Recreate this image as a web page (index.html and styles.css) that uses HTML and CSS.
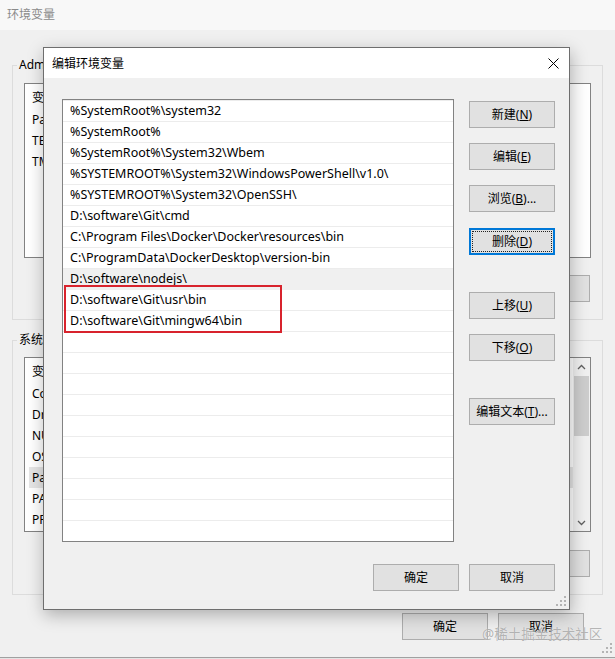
FILE: index.html
```html
<!DOCTYPE html>
<html lang="zh-CN">
<head>
<meta charset="utf-8">
<title>编辑环境变量</title>
<link rel="stylesheet" href="styles.css">
</head>
<body>
<div class="bgwin">
  <div class="bg-title">环境变量</div>
  <div class="bg-body">
    <fieldset class="group group-user">
      <legend>Administrator 的用户变量(U)</legend>
      <div class="lv">
        <div class="lv-main">
          <div class="lv-head"><span class="c1">变量</span><span>值</span></div>
          <div class="lv-row"><span class="c1">Path</span><span>C:\Users\Administrator\AppData\Local\Microsoft\WindowsApps;</span></div>
          <div class="lv-row"><span class="c1">TEMP</span><span>%USERPROFILE%\AppData\Local\Temp</span></div>
          <div class="lv-row"><span class="c1">TMP</span><span>%USERPROFILE%\AppData\Local\Temp</span></div>
        </div>
      </div>
      <div class="btnrow">
        <button class="btn">新建(<u>N</u>)...</button>
        <button class="btn">编辑(<u>E</u>)...</button>
        <button class="btn">删除(<u>D</u>)</button>
      </div>
    </fieldset>
    <fieldset class="group group-sys">
      <legend>系统变量(S)</legend>
      <div class="lv">
        <div class="lv-main">
          <div class="lv-head"><span class="c1">变量</span><span>值</span></div>
          <div class="lv-row"><span class="c1">ComSpec</span><span>C:\Windows\system32\cmd.exe</span></div>
          <div class="lv-row"><span class="c1">DriverData</span><span>C:\Windows\System32\Drivers\DriverData</span></div>
          <div class="lv-row"><span class="c1">NUMBER_OF_PROCESSORS</span><span>8</span></div>
          <div class="lv-row"><span class="c1">OS</span><span>Windows_NT</span></div>
          <div class="lv-row lv-sel"><span class="c1">Path</span><span>C:\Windows\system32;C:\Windows;</span></div>
          <div class="lv-row"><span class="c1">PATHEXT</span><span>.COM;.EXE;.BAT;.CMD;.VBS;.VBE;.JS</span></div>
          <div class="lv-row"><span class="c1">PROCESSOR_ARCHITECTURE</span><span>AMD64</span></div>
        </div>
        <div class="sbar">
          <div class="sbar-arrow"><svg width="9" height="6" viewBox="0 0 9 6"><path d="M1 5 L4.5 1.5 L8 5" fill="none" stroke="#606060" stroke-width="1.3"/></svg></div>
          <div class="sbar-track"><div class="sbar-thumb"></div></div>
          <div class="sbar-arrow"><svg width="9" height="6" viewBox="0 0 9 6"><path d="M1 1 L4.5 4.5 L8 1" fill="none" stroke="#606060" stroke-width="1.3"/></svg></div>
        </div>
      </div>
      <div class="btnrow btnrow-sys">
        <button class="btn">新建(<u>W</u>)...</button>
        <button class="btn">编辑(<u>I</u>)...</button>
        <button class="btn">删除(<u>L</u>)</button>
      </div>
    </fieldset>
    <div class="bg-foot">
      <button class="btn">确定</button>
      <button class="btn">取消</button>
    </div>
  </div>
  <div class="taskstrip"></div>
  <svg class="grip grip-bg" width="10" height="10" viewBox="0 0 10 10"><g fill="#b4b4b4"><rect x="8" y="0" width="2" height="2"/><rect x="4" y="4" width="2" height="2"/><rect x="8" y="4" width="2" height="2"/><rect x="0" y="8" width="2" height="2"/><rect x="4" y="8" width="2" height="2"/><rect x="8" y="8" width="2" height="2"/></g></svg>
  <div class="watermark">@稀土掘金技术社区</div>
</div>

<div class="dialog">
  <div class="dlg-title">
    <span>编辑环境变量</span>
    <svg class="dlg-close" width="11" height="11" viewBox="0 0 11 11"><path d="M0.5 0.5 L10.5 10.5 M10.5 0.5 L0.5 10.5" stroke="#000" stroke-width="1"/></svg>
  </div>
  <div class="dlg-body">
    <div class="dlg-main">
      <div class="plist">
        <div class="prow">%SystemRoot%\system32</div>
        <div class="prow">%SystemRoot%</div>
        <div class="prow">%SystemRoot%\System32\Wbem</div>
        <div class="prow">%SYSTEMROOT%\System32\WindowsPowerShell\v1.0\</div>
        <div class="prow">%SYSTEMROOT%\System32\OpenSSH\</div>
        <div class="prow">D:\software\Git\cmd</div>
        <div class="prow">C:\Program Files\Docker\Docker\resources\bin</div>
        <div class="prow">C:\ProgramData\DockerDesktop\version-bin</div>
        <div class="prow prow-hover">D:\software\nodejs\</div>
        <div class="prow">D:\software\Git\usr\bin</div>
        <div class="prow">D:\software\Git\mingw64\bin</div>
        <div class="redmark"></div>
      </div>
      <div class="btncol">
        <button class="btn">新建(<u>N</u>)</button>
        <button class="btn">编辑(<u>E</u>)</button>
        <button class="btn">浏览(<u>B</u>)...</button>
        <button class="btn btn-focus">删除(<u>D</u>)</button>
        <button class="btn btn-sep">上移(<u>U</u>)</button>
        <button class="btn">下移(<u>O</u>)</button>
        <button class="btn btn-sep">编辑文本(<u>T</u>)...</button>
      </div>
    </div>
    <div class="dlg-foot">
      <button class="btn">确定</button>
      <button class="btn">取消</button>
    </div>
  </div>
  <svg class="grip grip-dlg" width="10" height="10" viewBox="0 0 10 10"><g fill="#b4b4b4"><rect x="8" y="0" width="2" height="2"/><rect x="4" y="4" width="2" height="2"/><rect x="8" y="4" width="2" height="2"/><rect x="0" y="8" width="2" height="2"/><rect x="4" y="8" width="2" height="2"/><rect x="8" y="8" width="2" height="2"/></g></svg>
</div>
</body>
</html>
```

FILE: styles.css
```css
* { box-sizing: border-box; }
html, body { margin: 0; padding: 0; }
body {
  width: 615px;
  height: 659px;
  overflow: hidden;
  position: relative;
  background: #f0f0f0;
  font-family: "Noto Sans", "Noto Sans CJK SC", sans-serif;
  font-size: 12px;
  color: #000;
}
u { text-decoration: underline; text-underline-offset: 1px; }

.btn {
  width: 86px;
  height: 27px;
  flex: none;
  background: #e1e1e1;
  border: 1px solid #adadad;
  padding: 0;
  margin: 0;
  font: inherit;
  color: #000;
  line-height: 1;
  display: flex;
  align-items: center;
  justify-content: center;
  position: relative;
}

/* background window */
.bgwin {
  width: 615px;
  height: 659px;
  display: flex;
  flex-direction: column;
  position: relative;
}
.bg-title {
  height: 30px;
  line-height: 30px;
  padding-left: 7px;
  color: #8a8a8a;
  background: #f8f8f8;
  flex: none;
}
.bg-body {
  padding: 27px 12px 0 12px;
}
.group {
  margin: 0;
  border: 1px solid #dcdcdc;
  padding: 10px 11px 17px 11px;
  min-width: 0;
}
.group legend {
  padding: 0 2px;
  margin-left: -7px;
  line-height: 16px;
  height: 16px;
}
.group-sys {
  margin-top: 12px;
  padding-top: 9px;
}
.lv {
  height: 175px;
  border: 1px solid #828282;
  background: #fff;
  display: flex;
  overflow: hidden;
}
.lv-main { flex: 1; min-width: 0; }
.lv-head, .lv-row {
  display: flex;
  align-items: center;
  padding-left: 7px;
  white-space: nowrap;
}
.lv-head { height: 25px; }
.lv-row { height: 21px; }
.lv-sel {
  background: #e5e5e5;
  margin-left: 4px;
  padding-left: 3px;
}
.c1 { width: 150px; flex: none; }
.sbar {
  width: 17px;
  flex: none;
  background: #f0f0f0;
  display: flex;
  flex-direction: column;
}
.sbar-arrow {
  height: 17px;
  display: flex;
  align-items: center;
  justify-content: center;
}
.sbar-track {
  flex: 1;
  padding: 1px 1px 0 1px;
}
.sbar-thumb {
  height: 60px;
  background: #cdcdcd;
}
.btnrow {
  margin-top: 17px;
  display: flex;
  justify-content: flex-end;
  gap: 10px;
  padding-right: 1px;
}
.btnrow-sys { margin-top: 18px; }
.bg-foot {
  margin-top: 18px;
  margin-right: 19px;
  display: flex;
  justify-content: flex-end;
  gap: 10px;
}
.taskstrip {
  margin-top: auto;
  height: 2px;
  border-top: 1px solid #a0a0a0;
  background: #e4e4e4;
  flex: none;
}
.grip { position: absolute; }
.grip-bg { right: 3px; bottom: 6px; }
.watermark {
  position: absolute;
  left: 482px;
  top: 624px;
  font-size: 13.5px;
  line-height: 20px;
  color: rgba(150, 150, 150, 0.7);
  text-shadow: 0 0 1px rgba(255,255,255,0.8);
  letter-spacing: 0;
}

/* dialog */
.dialog {
  position: absolute;
  left: 43px;
  top: 47px;
  width: 527px;
  height: 563px;
  border: 1px solid #6e6e6e;
  background: #f0f0f0;
  box-shadow: 1px 5px 16px rgba(0, 0, 0, 0.28);
  display: flex;
  flex-direction: column;
}
.dlg-title {
  height: 30px;
  flex: none;
  background: #fff;
  display: flex;
  align-items: center;
  justify-content: space-between;
  padding: 0 10px 0 8px;
}
.dlg-close { display: block; }
.dlg-body {
  flex: 1;
  display: flex;
  flex-direction: column;
  padding: 21px 14px 18px 18px;
}
.dlg-main {
  display: flex;
  gap: 15px;
}
.plist {
  width: 392px;
  height: 443px;
  flex: none;
  padding-top: 1px;
  border: 1px solid #828282;
  background-color: #fff;
  background-image: repeating-linear-gradient(to bottom, transparent 0, transparent 20px, #ececec 20px, #ececec 21px);
  background-position: 0 1px;
  position: relative;
  overflow: hidden;
}
.prow {
  height: 21px;
  line-height: 20px;
  padding-left: 7px;
  font-size: 12.5px;
  white-space: nowrap;
}
.prow-hover { background: #f0f0f0; }
.redmark {
  position: absolute;
  left: 1px;
  top: 185px;
  width: 218px;
  height: 48px;
  border: 2px solid #d8232d;
}
.btncol {
  margin-top: 2px;
  display: flex;
  flex-direction: column;
  gap: 15px;
}
.btn-sep { margin-top: 22px; }
.btn-focus {
  margin-top: 1px;
  border: 1px solid #0078d7;
  box-shadow: inset 0 0 0 1px #0078d7;
}
.btn-focus::after {
  content: "";
  position: absolute;
  inset: 2px;
  border: 1px dotted #222;
}
.dlg-foot {
  margin-top: 22px;
  display: flex;
  justify-content: flex-end;
  gap: 10px;
}
.grip-dlg { right: 3px; bottom: 3px; }
```
